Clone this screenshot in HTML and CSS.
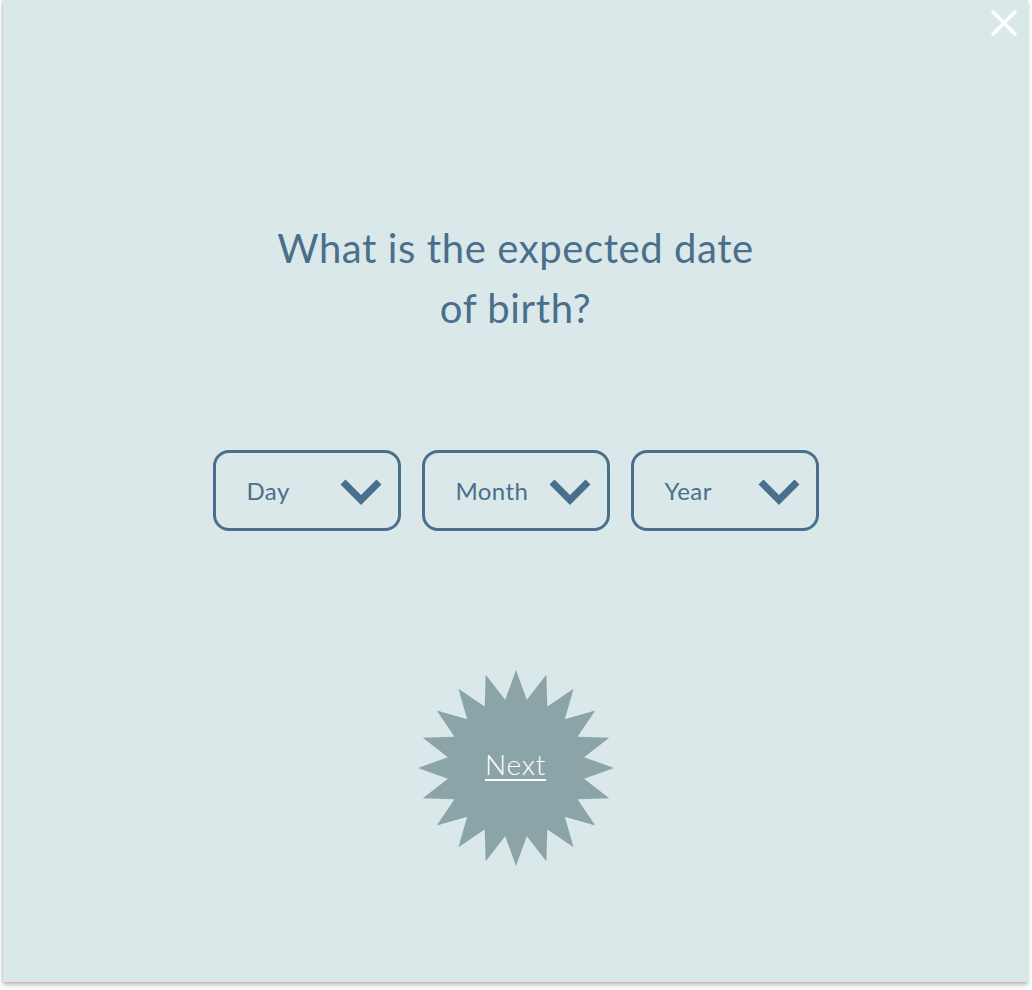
FILE: index.html
```html
<!DOCTYPE html>
<html>
<head>
<meta charset="utf-8">
<link rel="stylesheet" href="styles.css">
</head>
<body>
<div class="panel">
  <button class="close" aria-label="Close">
    <svg width="28" height="28" viewBox="0 0 28 28"><path d="M2 2 L26 26 M26 2 L2 26" stroke="#fff" stroke-width="3.5" fill="none"/></svg>
  </button>
  <h1 class="question">What is the expected date<br>of birth?</h1>
  <div class="selects">
    <div class="select"><span>Day</span><svg class="chev" width="44" height="30" viewBox="0 0 44 30"><path d="M4 5 L22 23 L40 5" stroke="#4a6f8d" stroke-width="7" fill="none"/></svg></div>
    <div class="select"><span>Month</span><svg class="chev" width="44" height="30" viewBox="0 0 44 30"><path d="M4 5 L22 23 L40 5" stroke="#4a6f8d" stroke-width="7" fill="none"/></svg></div>
    <div class="select"><span>Year</span><svg class="chev" width="44" height="30" viewBox="0 0 44 30"><path d="M4 5 L22 23 L40 5" stroke="#4a6f8d" stroke-width="7" fill="none"/></svg></div>
  </div>
  <div class="next">
    <svg class="star" width="196" height="196" viewBox="-98 -98 196 196">
      <polygon id="starpoly" fill="#8ba4a8" points=""/>
    </svg>
    <a class="next-label" href="#">Next</a>
  </div>
</div>
<script>
(function(){
  var pts=[];var n=20,R=98,r=69;
  for(var i=0;i<n*2;i++){
    var a=(i*Math.PI/n)-Math.PI/2;var rad=i%2?r:R;
    pts.push((rad*Math.cos(a)).toFixed(2)+','+(rad*Math.sin(a)).toFixed(2));
  }
  document.getElementById('starpoly').setAttribute('points',pts.join(' '));
})();
</script>
</body>
</html>
```
FILE: styles.css
```css
html, body {
  margin: 0;
  padding: 0;
  background: #ffffff;
}
body {
  font-family: Lato, "Open Sans", sans-serif;
  height: 990px;
  overflow: hidden;
}
.panel {
  position: relative;
  margin-left: 3px;
  width: 1025px;
  height: 982px;
  background: #dae8e9;
  box-shadow: 0 3px 4px rgba(0,0,0,0.25), -1px 0 2px rgba(0,0,0,0.12);
  display: flex;
  flex-direction: column;
  align-items: center;
  box-sizing: border-box;
  padding-top: 218px;
}
.close {
  position: absolute;
  top: 9px;
  right: 10px;
  background: none;
  border: 0;
  padding: 0;
  width: 28px;
  height: 28px;
  cursor: pointer;
}
.close svg { display: block; }
.question {
  margin: 0;
  font-weight: 400;
  font-size: 40px;
  line-height: 60px;
  color: #4a6f8d;
  text-align: center;
  letter-spacing: 0.6px;
}
.selects {
  display: flex;
  gap: 21px;
  margin-top: 112px;
}
.select {
  width: 188px;
  height: 81px;
  box-sizing: border-box;
  border: 3.5px solid #4a6f8d;
  border-radius: 16px;
  display: flex;
  align-items: center;
  justify-content: space-between;
  padding: 0 15px 0 31px;
  color: #4a6f8d;
  font-size: 24px;
  letter-spacing: 0.4px;
}
.chev { display: block; margin-top: 2px; }
.next {
  position: relative;
  width: 196px;
  height: 196px;
  margin-top: 139px;
  display: flex;
  align-items: center;
  justify-content: center;
}
.star {
  position: absolute;
  left: 0;
  top: 0;
}
.next-label {
  position: relative;
  top: -4px;
  color: #ffffff;
  font-size: 28px;
  font-weight: 300;
  text-decoration: underline;
  text-decoration-thickness: 2px;
  text-underline-offset: 4px;
  letter-spacing: 0.8px;
}
```
